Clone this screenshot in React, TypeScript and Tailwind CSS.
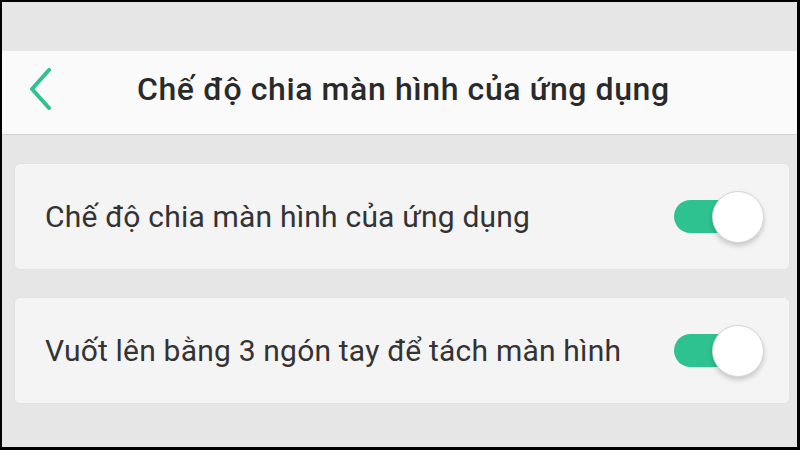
import { useState } from "react";

// one settings row with a toggle on the right
function SettingRow({ label, defaultOn = true }: { label: string; defaultOn?: boolean }) {
  const [on, setOn] = useState(defaultOn);

  return (
    <div className="flex h-[107px] items-center justify-between rounded-[6px] border border-[#e3e3e3] bg-[#f4f4f4] pl-[30px] pr-[25px]">
      <span className="text-[30px] tracking-[0.2px] text-[#333333]">{label}</span>
      <button
        type="button"
        onClick={() => setOn(!on)}
        className="relative h-[52px] w-[90px] cursor-pointer"
      >
        <span
          className={
            "absolute left-0 top-[9px] h-[33px] w-[76px] rounded-full " +
            (on ? "bg-[#2ec291]" : "bg-[#cccccc]")
          }
        />
        <span
          className={
            "absolute top-0 h-[52px] w-[52px] rounded-full border border-[#d6d6d6] bg-white shadow-[0_3px_5px_rgba(0,0,0,0.18)] " +
            (on ? "left-[38px]" : "left-0")
          }
        />
      </button>
    </div>
  );
}

function App() {
  return (
    <div
      className="h-[450px] w-[800px] overflow-hidden border-b-[3px] border-l-2 border-r-[3px] border-t-2 border-black bg-[#e6e6e6]"
      style={{ fontFamily: "Roboto, 'Noto Sans', sans-serif" }}
    >
      <div className="mt-[49px] flex h-[84px] items-center border-b border-[#d2d2d2] bg-[#fafafa] pb-[8px]">
        <button type="button" className="ml-[23px] flex h-[40px] w-[30px] items-center justify-center">
          <svg width="26" height="42" viewBox="0 0 26 42" fill="none">
            <path d="M22 2 L5 21 L22 40" stroke="#2ec291" strokeWidth="4" strokeLinecap="round" strokeLinejoin="round" />
          </svg>
        </button>
        <h1 className="ml-[82px] text-[32px] font-medium tracking-[0.6px] text-[#2a2a2a]">Chế độ chia màn hình của ứng dụng</h1>
      </div>

      <div className="mt-[28px] flex flex-col gap-[27px] pl-[12px] pr-[7px]">
        <SettingRow label="Chế độ chia màn hình của ứng dụng" />
        <SettingRow label="Vuốt lên bằng 3 ngón tay để tách màn hình" />
      </div>
    </div>
  );
}

export default App;
